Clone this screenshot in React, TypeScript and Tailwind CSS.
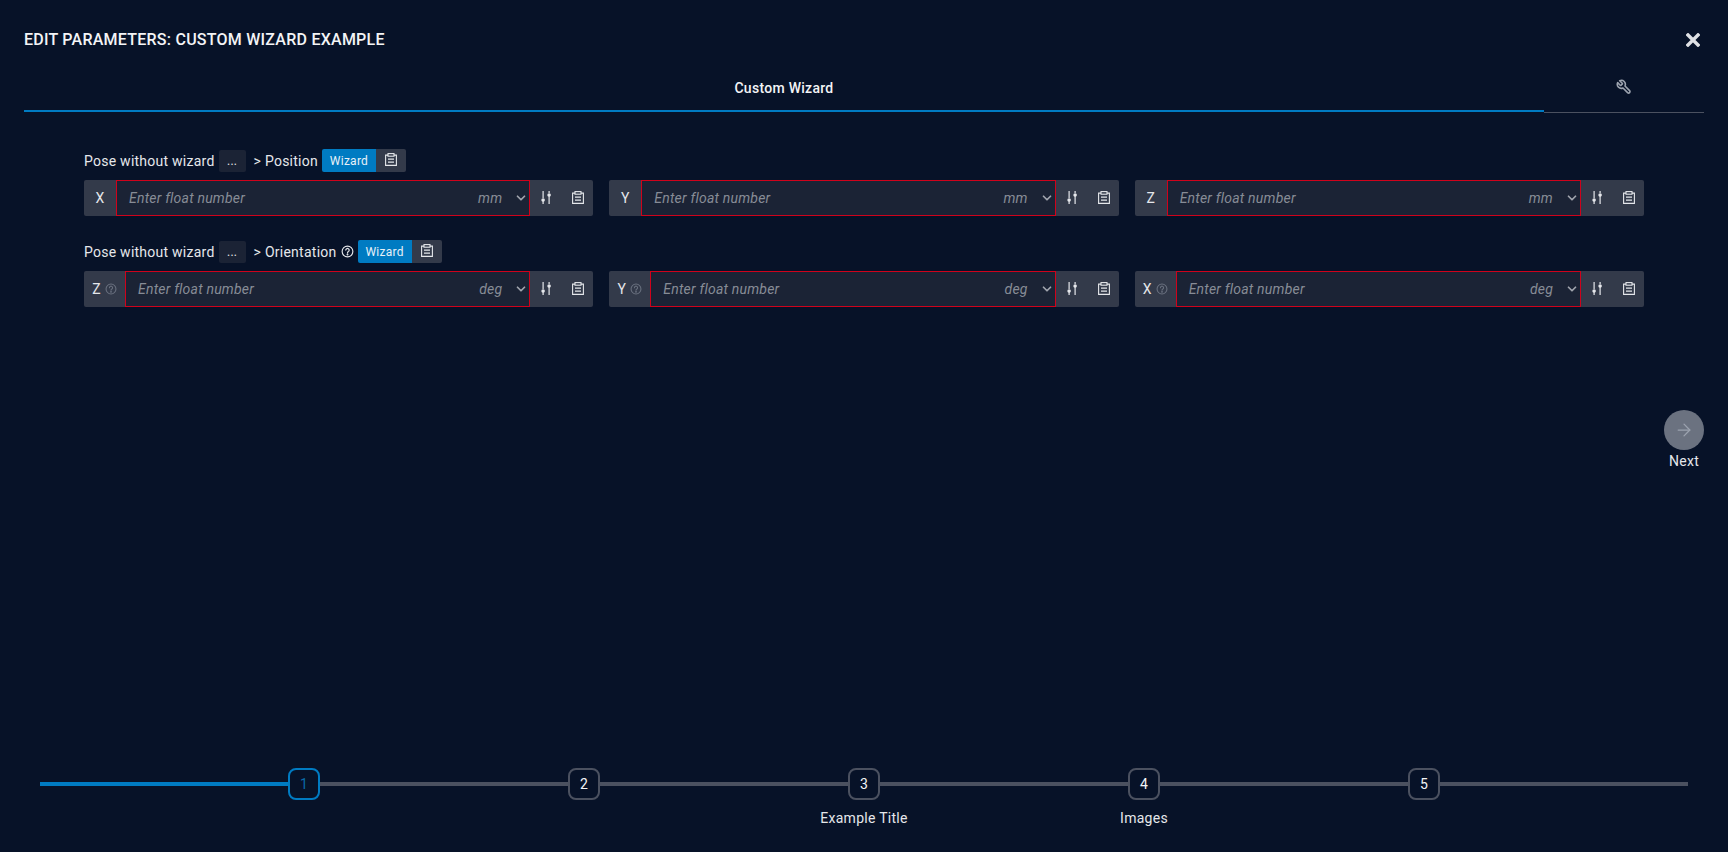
import React from "react";
import { ArrowRight, ChevronDown } from "lucide-react";

const Sliders = () => (
  <svg viewBox="0 0 10 13" className="w-[10px] h-[13px]" fill="#e5e7eb">
    <rect x="1.5" y="0" width="1.2" height="7" />
    <circle cx="2.1" cy="9" r="1.8" />
    <rect x="1.5" y="10" width="1.2" height="3" />
    <rect x="7.5" y="0" width="1.2" height="2" />
    <circle cx="8.1" cy="4" r="1.8" />
    <rect x="7.5" y="5" width="1.2" height="8" />
  </svg>
);

const Clip = () => (
  <svg viewBox="0 0 12 13" className="w-[12px] h-[13px]" fill="none" stroke="#e5e7eb" strokeWidth="1.1">
    <path d="M3 2.1H.6v10.3h10.8V2.1H9" />
    <rect x="3" y="0.6" width="6" height="2.6" fill="#333a4a" />
    <path d="M3 6.2h6M3 9.2h6" strokeWidth="1.3" />
  </svg>
);

const Help = ({ className }: { className: string }) => (
  <svg viewBox="0 0 16 16" className={className} fill="none" stroke="currentColor" strokeWidth="1.4">
    <circle cx="8" cy="8" r="6.6" />
    <path d="M5.9 6.3a2.1 2.1 0 1 1 3.2 1.8c-.7.4-1.1.8-1.1 1.6" strokeLinecap="round" />
    <circle cx="8" cy="11.7" r="0.5" fill="currentColor" />
  </svg>
);

const Field = ({ label, unit, help }: { label: string; unit: string; help?: boolean }) => (
  <div className="flex h-9 rounded-[2px] bg-[#333a4a] text-[#e5e7eb]">
    <div className={`flex items-center justify-center gap-1 text-sm ${help ? "w-[41px]" : "w-8"}`}>
      <span>{label}</span>
      {help && <Help className="w-3 h-3 text-[#6b7280]" />}
    </div>
    <div className="flex flex-1 items-center border border-[#d0021b] bg-[#1b2335] italic text-sm tracking-[0.015em] text-[#878c96]">
      <span className="flex-1 pl-[12px]">Enter float number</span>
      <span className="mr-[12px]">{unit}</span>
      <ChevronDown className="w-[14px] h-[14px] text-[#a0a4ad]" strokeWidth={3} />
      <span className="w-[1px]" />
    </div>
    <div className="flex w-8 items-center justify-center pb-0.5"><Sliders /></div>
    <div className="flex w-[32px] items-center justify-center pb-0.5 mr-[-1px]"><Clip /></div>
  </div>
);

const Label = ({ tail, help }: { tail: string; help?: boolean }) => (
  <div className="flex h-[23px] items-center text-sm tracking-[0.018em] text-[#e5e7eb]">
    <span>Pose without wizard</span>
    <span className="ml-1 flex h-[22px] w-[27px] items-center justify-center rounded-[2px] bg-[#1b2335] text-xs">...</span>
    <span className="ml-2">{tail}</span>
    {help && <Help className="ml-1 w-[13px] h-[13px] text-[#e5e7eb]" />}
    <div className="ml-1 flex h-[23px] overflow-hidden rounded-[2px]">
      <span className="flex w-[54px] items-center justify-center bg-[#007bc2] text-xs text-[#e8f1f8]">Wizard</span>
      <span className="flex w-[30px] items-center justify-center bg-[#333a4a] pb-0.5"><Clip /></span>
    </div>
  </div>
);

const bar = "h-1 w-[248px]";
const Step = ({ n, active }: { n: number; active?: boolean }) => (
  <div className={`flex h-8 w-8 items-center justify-center rounded-lg border-2 text-sm ${active ? "border-[#007bc2] text-[#0a6aa8]" : "border-[#4b5160] text-[#f3f4f6]"}`}>
    {n}
  </div>
);

export default function App() {
  return (
    <div className="relative flex h-[852px] flex-col bg-[#071228] px-6 font-['Roboto',sans-serif]">
      <div className="flex h-[70px] items-center justify-between pt-2.5">
        <h1 className="text-base font-medium uppercase tracking-[0.015em] text-[#f3f4f6]">Edit parameters: Custom Wizard Example</h1>
        <svg viewBox="0 0 14 14" className="mr-1 h-[14px] w-[14px]" stroke="#dfe1e5" strokeWidth="3.4" strokeLinecap="square">
          <path d="M2 2l10 10M12 2L2 12" />
        </svg>
      </div>

      <div className="flex h-[42px]">
        <div className="flex w-[1520px] items-start justify-center border-b-2 border-[#007bc2] pt-[8px] text-sm font-medium tracking-[0.02em] text-[#f3f4f6]">Custom Wizard</div>
      </div>
      <div className="ml-[1520px] h-[1px] w-[160px] bg-[#4b5160]" />

      <div className="flex flex-col px-[60px] pt-[36px]">
        <Label tail="> Position" />
        <div className="mt-2 grid grid-cols-3 gap-4">
          <Field label="X" unit="mm" />
          <Field label="Y" unit="mm" />
          <Field label="Z" unit="mm" />
        </div>
        <div className="mt-6">
          <Label tail="> Orientation" help />
        </div>
        <div className="mt-2 grid grid-cols-3 gap-4">
          <Field label="Z" unit="deg" help />
          <Field label="Y" unit="deg" help />
          <Field label="X" unit="deg" help />
        </div>
      </div>

      <svg viewBox="0 0 24 24" className="absolute left-[1616px] top-[79px] h-4 w-4" fill="none" stroke="#9ca3af" strokeWidth="2.4" strokeLinejoin="round">
        <g transform="translate(24 0) scale(-1 1)">
          <path d="M14.7 6.3a1 1 0 0 0 0 1.4l1.6 1.6a1 1 0 0 0 1.4 0l3.77-3.77a6 6 0 0 1-7.94 7.94l-6.91 6.91a2.12 2.12 0 0 1-3-3l6.91-6.91a6 6 0 0 1 7.94-7.94l-3.76 3.76z" />
        </g>
      </svg>

      <div className="absolute left-[1664px] top-[410px] flex w-10 flex-col items-center">
        <div className="flex h-10 w-10 items-center justify-center rounded-full bg-[#6b7280]">
          <ArrowRight className="h-5 w-5 text-[#9ca3af]" strokeWidth={1.5} />
        </div>
        <span className="mt-[1px] text-sm tracking-[0.02em] text-[#e5e7eb]">Next</span>
      </div>

      <div className="mt-auto pb-[24px] pl-4">
        <div className="flex items-center">
          <div className={`${bar} bg-[#007bc2]`} />
          <Step n={1} active />
          <div className={`${bar} bg-[#4b5160]`} />
          <Step n={2} />
          <div className={`${bar} bg-[#4b5160]`} />
          <Step n={3} />
          <div className={`${bar} bg-[#4b5160]`} />
          <Step n={4} />
          <div className={`${bar} bg-[#4b5160]`} />
          <Step n={5} />
          <div className={`${bar} bg-[#4b5160]`} />
        </div>
        <div className="ml-[124px] mt-2 flex text-sm tracking-[0.02em] text-[#e5e7eb]">
          <span className="w-[280px]" />
          <span className="w-[280px]" />
          <span className="w-[280px] text-center">Example Title</span>
          <span className="w-[280px] text-center">Images</span>
          <span className="w-[280px]" />
        </div>
      </div>
    </div>
  );
}
